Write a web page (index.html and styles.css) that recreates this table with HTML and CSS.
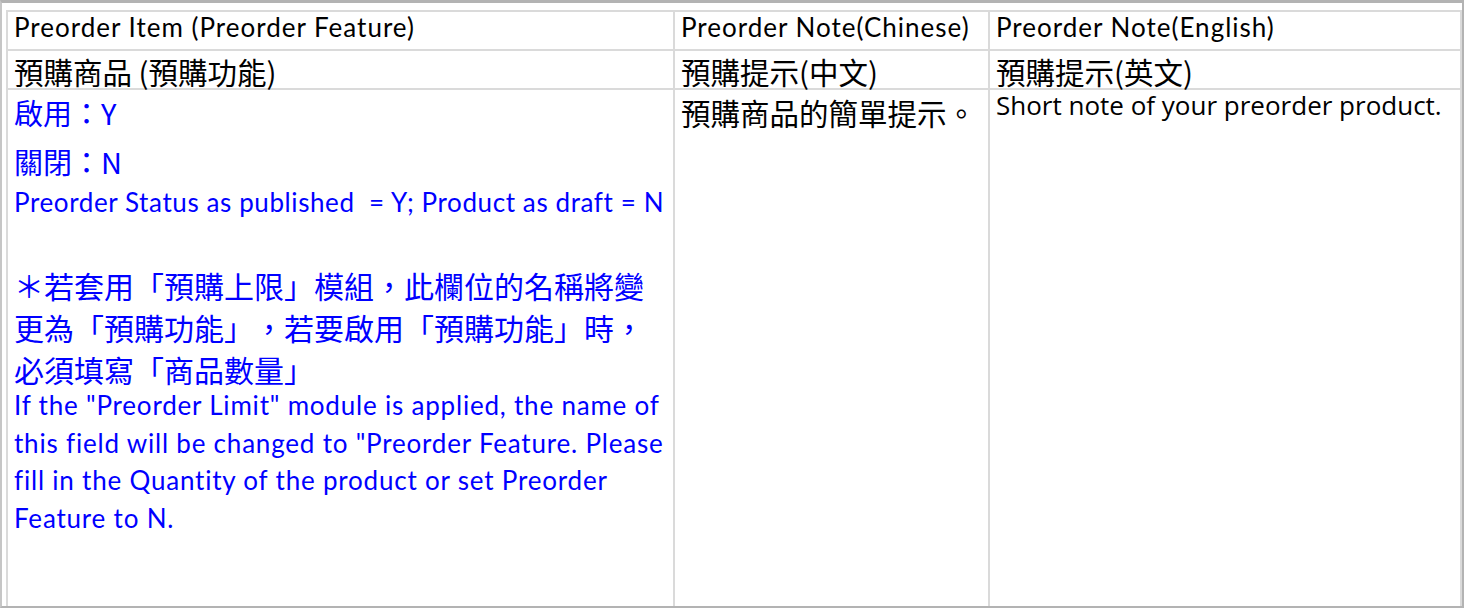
FILE: index.html
```html
<!DOCTYPE html>
<html lang="zh-Hant">
<head>
<meta charset="utf-8">
<title>Preorder</title>
<link rel="stylesheet" href="styles.css">
</head>
<body>
<div class="frame">
  <table class="sheet">
    <colgroup>
      <col class="c1">
      <col class="c2">
      <col class="c3">
    </colgroup>
    <tr class="r1">
      <td class="en">Preorder Item (Preorder Feature)</td>
      <td class="en">Preorder Note(Chinese)</td>
      <td class="en">Preorder Note(English)</td>
    </tr>
    <tr class="r2">
      <td class="zh">預購商品 (預購功能)</td>
      <td class="zh">預購提示(中文)</td>
      <td class="zh">預購提示(英文)</td>
    </tr>
    <tr class="r3">
      <td class="blue">
        <div class="l-y">啟用：Y</div>
        <div class="l-n">關閉：N</div>
        <div class="l-status">Preorder Status as published&nbsp; = Y; Product as draft = N</div>
        <div class="l-blank"></div>
        <div class="l-zh">＊若套用「預購上限」模組，此欄位的名稱將變<br>更為「預購功能」，若要啟用「預購功能」時，<br>必須填寫「商品數量」</div>
        <div class="l-en">If the "Preorder Limit" module is applied, the name of<br>this field will be changed to "Preorder Feature. Please<br>fill in the Quantity of the product or set Preorder<br>Feature to N.</div>
      </td>
      <td class="zh note-zh">預購商品的簡單提示。</td>
      <td class="note-en">Short note of your preorder product.</td>
    </tr>
  </table>
</div>
</body>
</html>
```
FILE: styles.css
```css
html, body {
  margin: 0;
  padding: 0;
  background: #ffffff;
}

.frame {
  box-sizing: border-box;
  width: 1464px;
  height: 608px;
  border-top: 3px solid #b3b3b3;
  border-bottom: 2px solid #b3b3b3;
  border-left: 2px solid #c6c6c6;
  border-right: 2px solid #b3b3b3;
  padding: 7px 2px 0 4px;
  overflow: hidden;
}

.sheet {
  border-collapse: collapse;
  table-layout: fixed;
  width: 1454px;
  height: 596px;
}

.c1 { width: 667px; }
.c2 { width: 315px; }
.c3 { width: 472px; }

.sheet td {
  border: 2px solid #dadada;
  padding: 0 5px 0 6px;
  color: #000;
  white-space: nowrap;
  text-spacing-trim: space-all;
}

.r1 td { height: 37px; vertical-align: top; }
.r2 td { height: 35px; vertical-align: bottom; padding-bottom: 2px; }
.r3 td { vertical-align: top; border-bottom: none; }

.en {
  font-family: Lato, "Noto Sans CJK TC", sans-serif;
  font-size: 26px;
  letter-spacing: 1px;
  line-height: 30px;
}

.zh {
  font-family: "Noto Sans CJK TC", sans-serif;
  font-size: 29.5px;
  line-height: 30px;
}

.blue {
  color: #0000ff !important;
  white-space: normal !important;
}

.l-y, .l-n {
  font-family: "Noto Sans CJK TC", sans-serif;
  font-size: 29px;
  line-height: 44px;
}
.l-n { margin-top: 5px; }

.l-status {
  font-family: Lato, "Noto Sans CJK TC", sans-serif;
  font-size: 26px;
  letter-spacing: 0.6px;
  line-height: 38px;
  white-space: nowrap;
}

.l-blank { height: 43px; }

.l-zh {
  font-family: "Noto Sans CJK TC", sans-serif;
  font-size: 30px;
  line-height: 42px;
  white-space: nowrap;
}

.l-en {
  font-family: Lato, "Noto Sans CJK TC", sans-serif;
  font-size: 26px;
  letter-spacing: 0.8px;
  line-height: 37.5px;
  margin-top: -3px;
  white-space: nowrap;
}

.note-zh {
  line-height: 44px;
}

.note-en {
  font-family: "Open Sans", sans-serif;
  font-size: 26px;
  line-height: 30px;
}
```
